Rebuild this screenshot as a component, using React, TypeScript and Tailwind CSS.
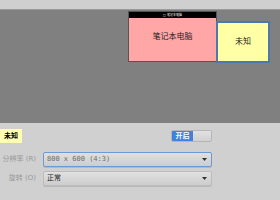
import React from "react";

const font = { fontFamily: '"DejaVu Sans", "Noto Sans CJK SC", sans-serif' };

function Caret() {
  return (
    <svg width="5" height="3" viewBox="0 0 5 3" className="shrink-0">
      <path d="M0 0H5L2.5 3Z" fill="#333" />
    </svg>
  );
}

function SelectRow({ label, value, focused, mono }: { label: string; value: string; focused?: boolean; mono?: boolean }) {
  return (
    <div className="flex items-center">
      <div className="w-[40px] pr-[4px] text-right text-[7px] text-[#9a9a9a] whitespace-nowrap">{label}</div>
      <div
        className={`ml-[3px] flex h-[15px] w-[169px] items-center justify-between rounded-[2px] bg-gradient-to-b from-[#e0e0e0] to-[#cdcdcd] pl-[3px] pr-[4px] ${
          focused ? "border border-[#6a9ad8] text-[#6d6d6d]" : "border border-[#bcbcbc] text-[#222]"
        } shadow-[0_1px_0_#b8b8b8]`}
      >
        <span
          className="text-[7px] whitespace-pre"
          style={mono ? { fontFamily: '"DejaVu Sans Mono", "Noto Sans CJK SC", monospace' } : undefined}
        >
          {value}
        </span>
        <Caret />
      </div>
    </div>
  );
}

export default function App() {
  return (
    <div className="flex h-[200px] w-[280px] flex-col overflow-hidden bg-[#d0d0d0]" style={font}>
      <div className="h-[10px] bg-[#cfcfcf] border-b border-[#9a9a9a]" />
      <div className="relative h-[113px] bg-[#808080]">
        <div className="absolute left-[128px] top-[1px] flex h-[51px] w-[89px] flex-col border border-[#555] bg-[#ffa6a6]">
          <div className="flex h-[6px] items-center justify-center bg-black">
            <span className="text-[3px] leading-none text-white">□ 笔记本电脑</span>
          </div>
          <div className="flex flex-1 items-center justify-center pb-[5px] text-[8px] text-[#222]">笔记本电脑</div>
        </div>
        <div className="absolute left-[216px] top-[11px] flex h-[42px] w-[54px] items-center justify-center border-2 border-[#4d78ad] bg-[#ffffa6] text-[8px] text-[#222]">
          未知
        </div>
      </div>
      <div className="flex flex-col pt-[6px]">
        <div className="flex h-[14px] items-center justify-between">
          <div className="flex h-[14px] w-[22px] items-center justify-center bg-[#ffffb3] text-[7px] font-bold text-black">未知</div>
          <div className="mr-[68px] flex h-[12px] w-[41px] overflow-hidden rounded-[2px] border border-[#b5b5b5]">
            <div className="flex w-[21px] items-center justify-center bg-[#3d83de] text-[7px] font-bold text-white">开启</div>
            <div className="flex-1 bg-gradient-to-b from-[#e2e2e2] to-[#d0d0d0]" />
          </div>
        </div>
        <div className="mt-[9px] flex flex-col gap-[4px]">
          <SelectRow label="分辨率 (R)" value="800 x 600 (4:3)" focused mono />
          <SelectRow label="旋转 (O)" value="正常" />
        </div>
      </div>
    </div>
  );
}
